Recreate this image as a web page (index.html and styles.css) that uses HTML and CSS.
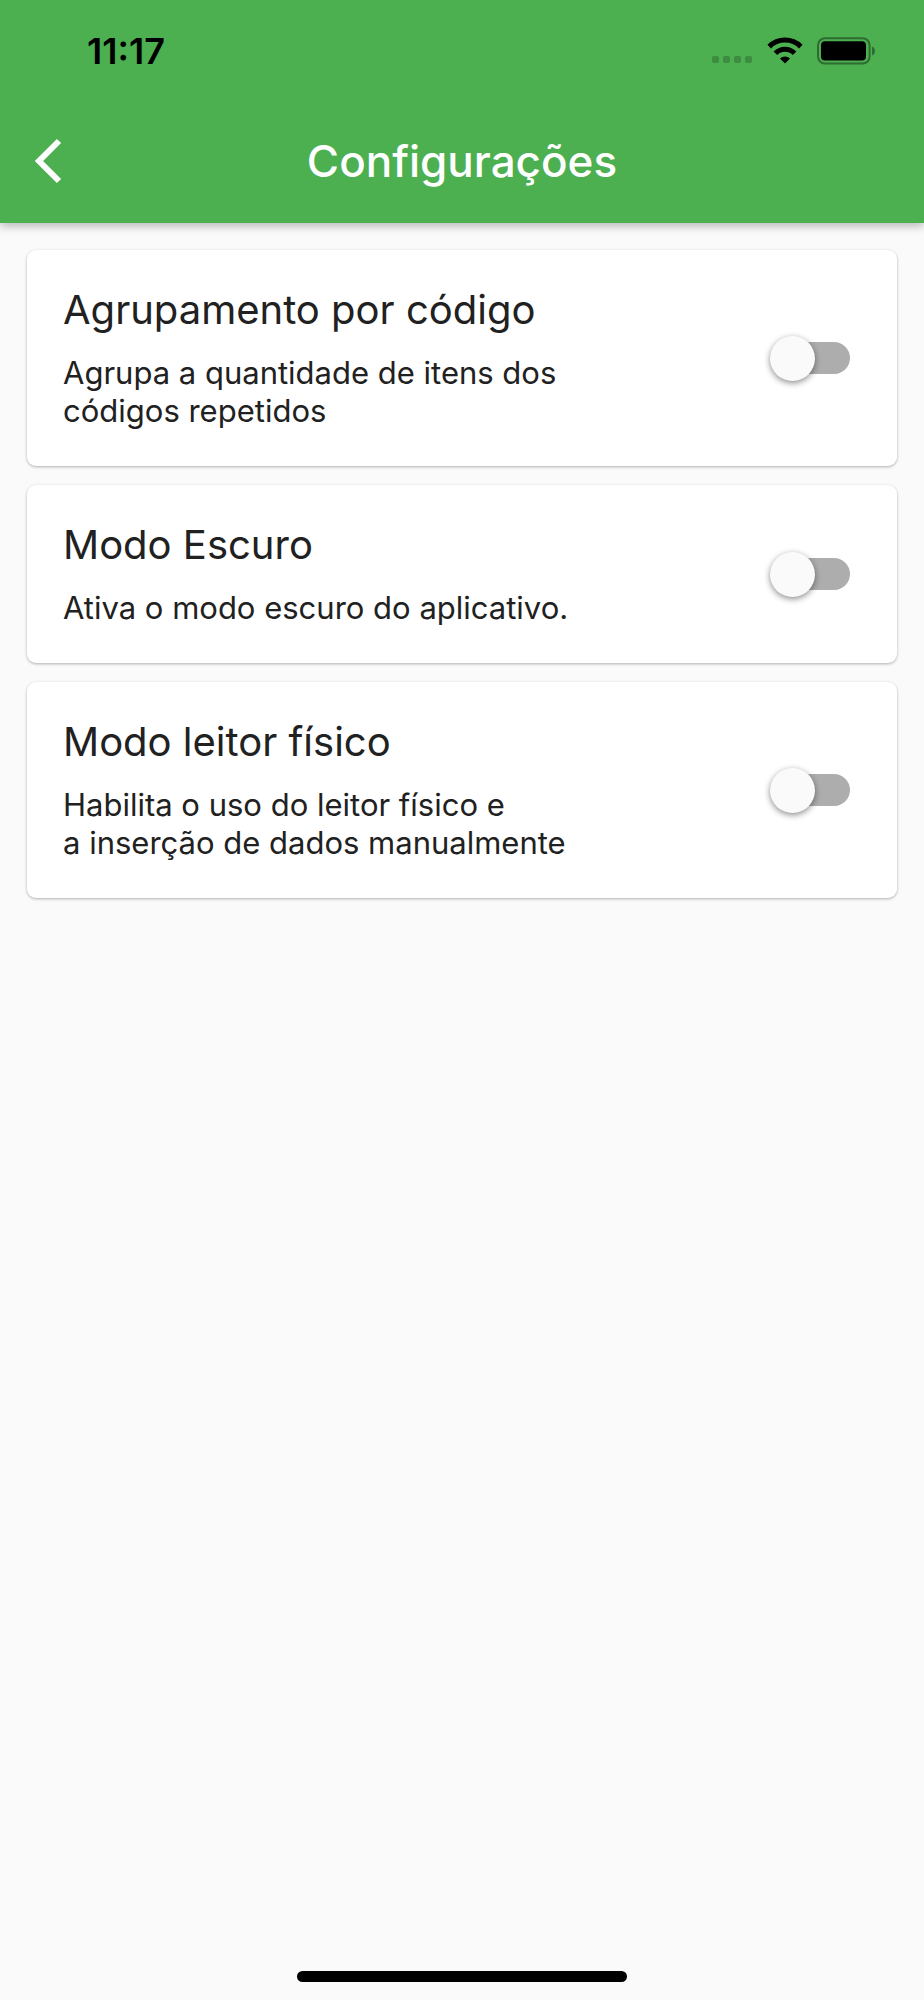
FILE: index.html
```
<!DOCTYPE html>
<html lang="pt-BR">
<head>
  <meta charset="UTF-8">
  <meta name="viewport" content="width=device-width, initial-scale=1.0">
  <title>Configurações</title>
  <link rel="stylesheet" href="styles.css">
</head>
<body>
  <header class="topo">
    <div class="status">
      <span class="hora">11:17</span>
      <div class="icones">
        <svg width="42" height="28" viewBox="0 0 42 28" fill="#3d8d40" aria-hidden="true">
          <rect x="1" y="19" width="7" height="7" rx="2"/>
          <rect x="12" y="19" width="7" height="7" rx="2"/>
          <rect x="23" y="19" width="7" height="7" rx="2"/>
          <rect x="34" y="19" width="7" height="7" rx="2"/>
        </svg>
        <svg width="36" height="28" viewBox="0 0 36 28" fill="none" stroke="#000" stroke-width="5" aria-hidden="true">
          <path d="M2.2 9.6a22.5 22.5 0 0 1 31.6 0"/>
          <path d="M8.4 16.2a13.6 13.6 0 0 1 19.2 0"/>
          <path d="M18 26.6l-5-5.2a7.4 7.4 0 0 1 10 0z" fill="#000" stroke="none"/>
        </svg>
        <svg width="60" height="28" viewBox="0 0 60 28" aria-hidden="true">
          <rect x="1" y="1.2" width="51.6" height="25.4" rx="7" fill="none" stroke="#2f6c32" stroke-width="2"/>
          <rect x="4" y="4.2" width="45" height="19.4" rx="4" fill="#000"/>
          <path d="M55 9.5c4 1.6 4 7.4 0 9z" fill="#2f6c32"/>
        </svg>
      </div>
    </div>
    <div class="barra">
      <button class="voltar" type="button" aria-label="Voltar">
        <svg width="28" height="46" viewBox="0 0 28 46" fill="none" stroke="#fff" stroke-width="6" aria-hidden="true">
          <path d="M25 3L5 23l20 20"/>
        </svg>
      </button>
      <h1>Configurações</h1>
    </div>
  </header>

  <main class="lista">
    <div class="card">
      <label class="texto" for="agrupamento">
        <span class="titulo">Agrupamento por código</span>
        <span class="descricao">Agrupa a quantidade de itens dos<br>códigos repetidos</span>
      </label>
      <input class="switch" type="checkbox" role="switch" id="agrupamento">
    </div>

    <div class="card">
      <label class="texto" for="escuro">
        <span class="titulo">Modo Escuro</span>
        <span class="descricao">Ativa o modo escuro do aplicativo.</span>
      </label>
      <input class="switch" type="checkbox" role="switch" id="escuro">
    </div>

    <div class="card">
      <label class="texto" for="leitor">
        <span class="titulo">Modo leitor físico</span>
        <span class="descricao">Habilita o uso do leitor físico e<br>a inserção de dados manualmente</span>
      </label>
      <input class="switch" type="checkbox" role="switch" id="leitor">
    </div>
  </main>

  <div class="home"></div>
</body>
</html>
```
FILE: styles.css
```
* {
  box-sizing: border-box;
}
body {
  margin: 0;
  min-height: 100vh;
  display: flex;
  flex-direction: column;
  background-color: #fafafa;
  color: #212121;
  font-family: Inter, 'Liberation Sans', sans-serif;
}
.topo {
  background-color: #4caf50;
  box-shadow: 0 3px 9px rgba(0, 0, 0, 0.28);
}
.status {
  display: flex;
  align-items: center;
  justify-content: space-between;
  height: 101px;
  padding: 0 47px 0 87px;
  color: #000;
}
.hora {
  font-size: 36px;
  font-weight: 600;
}
.icones {
  display: flex;
  gap: 14px;
}
.barra {
  display: grid;
  grid-template-columns: 64px 1fr 64px;
  align-items: center;
  height: 122px;
  padding: 0 18px 3px;
}
.voltar {
  display: flex;
  padding: 0 16px;
  border: none;
  background: none;
  cursor: pointer;
}
h1 {
  margin: 0;
  color: #fff;
  font-size: 44px;
  font-weight: 500;
  text-align: center;
}
.lista {
  display: flex;
  flex-direction: column;
  gap: 19px;
  padding: 27px;
}
.card {
  display: flex;
  align-items: center;
  justify-content: space-between;
  padding: 36px 47px 36px 36px;
  background-color: #fff;
  border-radius: 9px;
  box-shadow: 0 1px 3px rgba(0, 0, 0, 0.3);
}
.texto {
  display: flex;
  flex-direction: column;
  gap: 20px;
}
.titulo {
  font-size: 40px;
  line-height: 48px;
}
.descricao {
  font-size: 31px;
  line-height: 38px;
}
.switch {
  appearance: none;
  position: relative;
  flex-shrink: 0;
  width: 74px;
  height: 32px;
  margin: 0;
  border-radius: 16px;
  background-color: #adadad;
  cursor: pointer;
}
.switch::before {
  content: '';
  position: absolute;
  top: -6px;
  left: -6px;
  width: 45px;
  height: 45px;
  border-radius: 50%;
  background-color: #fafafa;
  box-shadow: 0 2px 6px rgba(0, 0, 0, 0.45);
}
.switch:checked {
  background-color: #a5d6a7;
}
.switch:checked::before {
  left: 35px;
  background-color: #4caf50;
}
.home {
  width: 330px;
  height: 11px;
  margin: auto auto 18px;
  border-radius: 6px;
  background-color: #000;
}
```
